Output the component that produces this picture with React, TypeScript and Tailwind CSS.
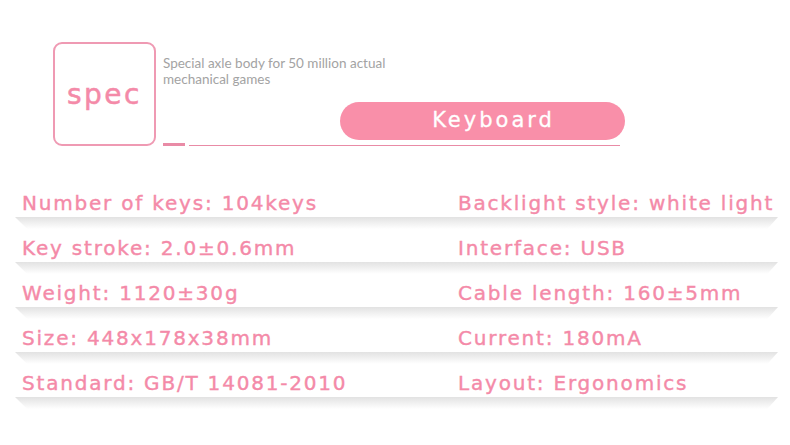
import React from 'react';

const specs: [string, string][] = [
  ['Number of keys: 104keys', 'Backlight style: white light'],
  ['Key stroke: 2.0±0.6mm', 'Interface: USB'],
  ['Weight: 1120±30g', 'Cable length: 160±5mm'],
  ['Size: 448x178x38mm', 'Current: 180mA'],
  ['Standard: GB/T 14081-2010', 'Layout: Ergonomics'],
];

const display = { fontFamily: '"DejaVu Sans", sans-serif' };

const SpecRow = ({ left, right }: { left: string; right: string }) => (
  <div className="flex flex-col">
    <div className="flex h-[33px] pt-[5px] items-center text-[20px] text-[#f48aa8] tracking-[1.8px] whitespace-nowrap [-webkit-text-stroke:0.4px_#f48aa8]" style={display}>
      <span className="w-[458px] pl-[22px]">{left}</span>
      <span>{right}</span>
    </div>
    <div className="ml-[15px] mr-[12px] h-[12px] bg-gradient-to-b from-[#e2e2e2] to-white [clip-path:polygon(0_0,100%_0,98.6%_100%,1.6%_100%)]" />
  </div>
);

export default function App() {
  return (
    <div className="w-[790px] h-[445px] bg-white overflow-hidden">
      {/* header */}
      <div className="flex pt-[42px] pl-[53px]">
        <div className="w-[103px] h-[104px] rounded-[9px] border-2 border-[#ef9ab3] flex items-center justify-center">
          <span className="pt-[2px] text-[28px] text-[#f48aa8] tracking-[2.5px] [-webkit-text-stroke:0.5px_#f48aa8]" style={display}>spec</span>
        </div>
        <div className="flex flex-col pl-[7px] w-[470px]">
          <p className="pt-[13px] text-[13.5px] leading-[16px] text-[#a3a3a3]" style={{ fontFamily: 'Lato, sans-serif' }}>
            Special axle body for 50 million actual
            <br />
            mechanical games
          </p>
          <div className="flex justify-end pt-[15px] pr-[1px]">
            <div className="w-[285px] h-[38px] pl-[22px] rounded-full bg-[#f98fa9] flex items-center justify-center">
              <span className="text-[21px] text-white tracking-[3px] [-webkit-text-stroke:0.3px_#ffffff]" style={display}>Keyboard</span>
            </div>
          </div>
          <div className="flex items-end gap-[4px] pt-[3px]">
            <div className="w-[22px] h-[3px] bg-[#e98ba6]" />
            <div className="w-[431px] h-px bg-[#e98ba6]" />
          </div>
        </div>
      </div>

      {/* spec list */}
      <div className="flex flex-col pt-[38px]">
        {specs.map(([l, r], i) => (
          <SpecRow key={i} left={l} right={r} />
        ))}
      </div>
    </div>
  );
}
